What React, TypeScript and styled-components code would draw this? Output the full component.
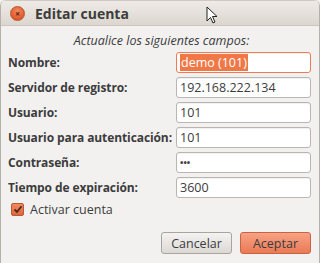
import React from 'react';
import styled, { createGlobalStyle } from 'styled-components';

const Global = createGlobalStyle`
  html, body {
    margin: 0;
    padding: 0;
    background: #f2f1f0;
  }
  body {
    font-family: "Open Sans", "DejaVu Sans", sans-serif;
    font-size: 12px;
    color: #3c3c3c;
  }
`;

const Window = styled.div`
  position: relative;
  width: 320px;
  height: 263px;
  box-sizing: border-box;
  background: #f2f1f0;
  border-left: 1px solid #b5b0aa;
  border-right: 1px solid #b5b0aa;
  border-radius: 6px 6px 0 0;
  overflow: hidden;
  display: flex;
  flex-direction: column;
`;

const TitleBar = styled.div`
  height: 26px;
  display: flex;
  align-items: center;
  gap: 10px;
  padding-left: 9px;
  background: linear-gradient(#eeebe7, #dcd6cf);
  border-top: 1px solid #cfc9c2;
  border-bottom: 1px solid #cbc5be;
  box-sizing: border-box;
`;

const CloseButton = styled.div`
  width: 15px;
  height: 15px;
  border-radius: 50%;
  background: radial-gradient(circle at 50% 35%, #f58a60, #e0582b 70%, #c9491f);
  border: 1px solid #b6562f;
  box-sizing: border-box;
  display: flex;
  align-items: center;
  justify-content: center;
  color: #5a2411;
  font-size: 9px;
  font-weight: bold;
  line-height: 1;
`;

const Title = styled.span`
  font-weight: bold;
  font-size: 14px;
  color: #3c3c3c;
`;

const Body = styled.div`
  flex: 1;
  display: flex;
  flex-direction: column;
  padding: 6px 8px 0 7px;
`;

const Subtitle = styled.div`
  text-align: center;
  font-style: italic;
  font-size: 12.5px;
  margin-bottom: 3px;
  padding-left: 4px;
`;

const Form = styled.div`
  display: grid;
  grid-template-columns: 168px 135px;
  row-gap: 4px;
  align-items: center;
`;

const Label = styled.label`
  font-weight: bold;
  font-size: 12px;
  white-space: nowrap;
  letter-spacing: -0.1px;
`;

const Field = styled.div<{ $focused?: boolean }>`
  height: 21px;
  box-sizing: border-box;
  background: #fff;
  border: 1px solid ${p => (p.$focused ? '#ef7b55' : '#b9b5b0')};
  border-radius: 3px;
  box-shadow: inset 0 1px 1px rgba(0, 0, 0, 0.06);
  display: flex;
  align-items: center;
  padding-left: 3px;
  font-size: 12.5px;
  color: #3c3c3c;
`;

const Selected = styled.span`
  background: #f07746;
  color: #fff;
  padding: 0 1px;
`;

const Dots = styled.span`
  font-size: 9px;
  font-weight: bold;
`;

const CheckRow = styled.div`
  display: flex;
  align-items: center;
  gap: 6px;
  margin: 3px 0 0 3px;
  font-size: 12.5px;
`;

const CheckBox = styled.div`
  width: 13px;
  height: 13px;
  box-sizing: border-box;
  border-radius: 2px;
  background: linear-gradient(#f08a62, #e0653c);
  border: 1px solid #b8592f;
  display: flex;
  align-items: center;
  justify-content: center;
`;

const Buttons = styled.div`
  margin-top: auto;
  margin-bottom: 9px;
  display: flex;
  justify-content: flex-end;
  gap: 8px;
`;

const Button = styled.button<{ $primary?: boolean }>`
  width: 71px;
  height: 22px;
  box-sizing: border-box;
  border-radius: 3px;
  font-family: inherit;
  font-size: 12.5px;
  color: #3c3c3c;
  padding: 0;
  border: 1px solid ${p => (p.$primary ? '#c8643f' : '#a8a49f')};
  background: ${p =>
    p.$primary
      ? 'linear-gradient(#f6a285, #eb7a55)'
      : 'linear-gradient(#f4f3f1, #dcd9d5)'};
`;

const Cursor = styled.svg`
  position: absolute;
  left: 205px;
  top: 6px;
`;

const rows: [string, React.ReactNode][] = [
  ['Servidor de registro:', '192.168.222.134'],
  ['Usuario:', '101'],
  ['Usuario para autenticación:', '101'],
  ['Contraseña:', <Dots key="d">•••</Dots>],
  ['Tiempo de expiración:', '3600'],
];

export default function App() {
  return (
    <>
      <Global />
      <Window>
        <TitleBar>
          <CloseButton>×</CloseButton>
          <Title>Editar cuenta</Title>
        </TitleBar>
        <Body>
          <Subtitle>Actualice los siguientes campos:</Subtitle>
          <Form>
            <Label>Nombre:</Label>
            <Field $focused>
              <Selected>demo (101)</Selected>
            </Field>
            {rows.map(([label, value]) => (
              <React.Fragment key={label}>
                <Label>{label}</Label>
                <Field>{value}</Field>
              </React.Fragment>
            ))}
          </Form>
          <CheckRow>
            <CheckBox>
              <svg width="10" height="9" viewBox="0 0 10 9">
                <path d="M1.5 4.5 L4 7 L8.5 1.2" fill="none" stroke="#4a2a1c" strokeWidth="1.8" />
              </svg>
            </CheckBox>
            Activar cuenta
          </CheckRow>
          <Buttons>
            <Button>Cancelar</Button>
            <Button $primary>Aceptar</Button>
          </Buttons>
        </Body>
        <Cursor width="12" height="19" viewBox="0 0 12 19">
          <path d="M1 1 L1 15 L4.5 11.5 L7 17 L9 16 L6.5 10.5 L11 10.5 Z" fill="#fff" stroke="#222" strokeWidth="1" />
        </Cursor>
      </Window>
    </>
  );
}
